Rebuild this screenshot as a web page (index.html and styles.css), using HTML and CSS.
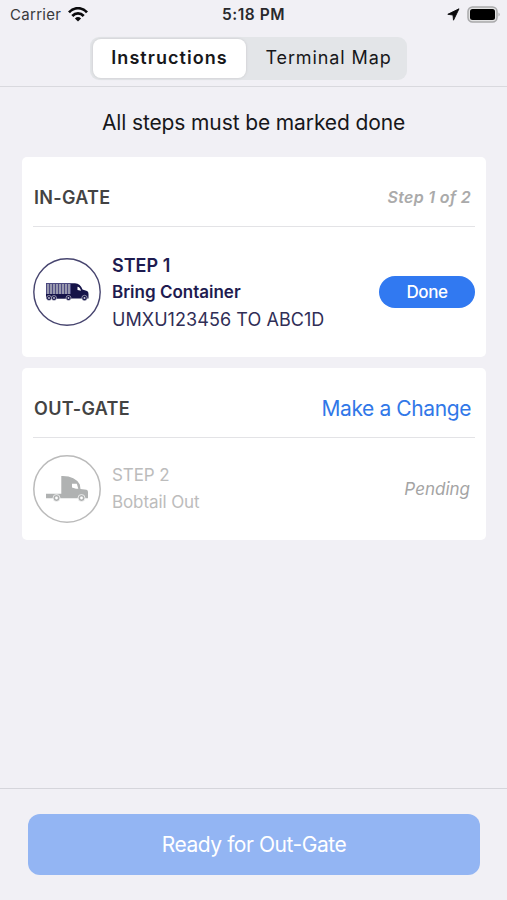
FILE: index.html
```html
<!DOCTYPE html>
<html lang="en">
<head>
<meta charset="utf-8">
<title>Instructions</title>
<link rel="stylesheet" href="styles.css">
</head>
<body>
<div class="app">
  <header class="header">
    <div class="status">
      <div class="status-left">
        <span class="carrier">Carrier</span>
        <svg class="wifi" width="20" height="15" viewBox="0 0 20 15" fill="none" stroke="#0a0a0c" stroke-width="2.7">
          <path d="M1 5.4C6-.2 14-.2 19 5.4"/>
          <path d="M4.3 9C7.5 5.5 12.500 5.500 15.700 9"/>
          <path d="M10 14.500L6.900 11.400Q10 8.800 13.100 11.400Z" fill="#0a0a0c" stroke="none"/>
        </svg>
      </div>
      <span class="clock">5:18 PM</span>
      <div class="status-right">
        <svg width="13" height="13" viewBox="0 0 13 13"><path d="M12 .8L.8 6.300L6 7L6.500 12.200Z" fill="#0a0a0c" stroke="#0a0a0c" stroke-width=".9" stroke-linejoin="round"/></svg>
        <svg width="34" height="17" viewBox="0 0 34 17"><rect x="1" y="1" width="29" height="15" rx="4.500" fill="#e2e2e3" stroke="#a9a9ab" stroke-width="1.500"/><rect x="3" y="3" width="25" height="11" rx="2.500" fill="#000"/><path d="M31.500 6.500Q34 8.500 31.500 10.500Z" fill="#a9a9ab"/></svg>
      </div>
    </div>
    <nav class="segments">
      <button class="segment active"><span>Instructions</span></button>
      <button class="segment idle"><span>Terminal Map</span></button>
    </nav>
  </header>
  <main class="main">
    <h1 class="headline">All steps must be marked done</h1>
    <section class="card card-in">
      <div class="card-head">
        <h2 class="gate">IN-GATE</h2>
        <span class="counter">Step 1 of 2</span>
      </div>
      <div class="step">
        <svg class="badge navy" width="68" height="68" viewBox="0 0 68 68">
          <circle cx="34" cy="34" r="33.200" fill="none" stroke="#47456f" stroke-width="1.400"/>
          <path d="M13 25H38V41H13Z" fill="#9797ad"/>
          <path d="M13 25.500H38M13.500 25V38M16.500 26V36M19.500 26V36M22.500 26V36M25.500 26V36M28.500 26V36M31.500 26V36M34.500 26V36M37.500 26V36" stroke="#44427a" stroke-width=".9" fill="none"/>
          <path d="M13 36H38.500V40.500H13Z"/>
          <path d="M38 25.200H42Q47.500 25.500 49.500 31.500L54 33Q55.500 33.500 55.500 36V40.500H38Z"/>
          <path d="M44.500 28.800Q46.800 29 48 32.800L44.500 32Z" fill="#fff"/>
          <g stroke="#fff" stroke-width=".5"><circle cx="16" cy="40" r="2.500"/><circle cx="21" cy="40" r="2.500"/><circle cx="35.500" cy="40" r="2.500"/><circle cx="51.500" cy="40" r="2.700"/></g>
          <g fill="#ccccda"><circle cx="16" cy="40" r=".9"/><circle cx="21" cy="40" r=".9"/><circle cx="35.500" cy="40" r=".9"/><circle cx="51.500" cy="40" r="1"/></g>
        </svg>
        <div class="detail navy">
          <span class="step-name">STEP 1</span>
          <span class="task">Bring Container</span>
          <span class="unit">UMXU123456 TO ABC1D</span>
        </div>
        <button class="done"><span>Done</span></button>
      </div>
    </section>
    <section class="card card-out">
      <div class="card-head">
        <h2 class="gate">OUT-GATE</h2>
        <a class="change">Make a Change</a>
      </div>
      <div class="step">
        <svg class="badge" width="68" height="68" viewBox="0 0 68 68" fill="#b0b2b2">
          <circle cx="34" cy="34" r="33.200" fill="none" stroke="#bbb" stroke-width="1.500"/>
          <path d="M13 38.700H28.300V21Q42 20.500 46.800 29.500L47.500 34L53.500 34.700Q55 35 55 37V43.300H13Z"/>
          <path d="M39 28.700H43.800L45.300 33.800H43L39 32.500Z" fill="#fff"/>
          <g stroke="#fff" stroke-width=".7"><circle cx="23.500" cy="43" r="3.500"/><circle cx="48.500" cy="43" r="3.500"/></g>
          <g fill="#fff"><circle cx="23.500" cy="43" r="1.400"/><circle cx="48.500" cy="43" r="1.400"/></g>
        </svg>
        <div class="detail muted">
          <span>STEP 2</span>
          <span>Bobtail Out</span>
        </div>
        <span class="pending">Pending</span>
      </div>
    </section>
  </main>
  <footer class="footer">
    <button class="ready"><span>Ready for Out-Gate</span></button>
  </footer>
</div>
</body>
</html>
```
FILE: styles.css
```css
* { box-sizing: border-box; }
body { margin: 0; background: #f1f0f5; font-family: Inter, "Liberation Sans", sans-serif; color: #17171a; }
button { border: 0; padding: 0; font: inherit; color: inherit; background: none; }
h1, h2 { margin: 0; }
span, a, h1, h2 { white-space: nowrap; }
svg { display: block; flex: none; }
.app { height: 900px; display: flex; flex-direction: column; }
.header { height: 87px; border-bottom: 1px solid #d9d9de; }
.status { height: 30px; display: grid; grid-template-columns: 1fr auto 1fr; align-items: center; padding: 0 9px; line-height: 30px; }
.status-left, .status-right { display: flex; align-items: center; }
.status-left { gap: 7px; padding-left: 1px; }
.status-right { justify-content: flex-end; gap: 7px; padding-bottom: 1px; margin-right: -3px; }
.carrier { font-size: 15px; letter-spacing: .3px; color: #39393c; }
.wifi { margin-top: -1px; }
.clock { font-size: 15.5px; font-weight: 600; letter-spacing: .5px; color: #29292c; }
.segments { width: 317px; height: 43px; margin: 7px auto 0 90px; padding: 2px 3px; display: flex; background: #e3e5e8; border-radius: 9px; }
.segment { flex: 1; font-size: 18px; letter-spacing: .9px; padding-bottom: 2px; }
.segment.active { flex: 0 0 153px; background: #fff; border-radius: 8px; font-weight: 600; letter-spacing: 1.05px; box-shadow: 0 0 2px 1px #d5d6d9; }
.segment.idle { padding-left: 7px; }
.main { flex: 1; padding: 0 22px; }
.headline { height: 70px; line-height: 72px; text-align: center; font-size: 21px; font-weight: 400; letter-spacing: -.12px; }
.card { background: #fff; border-radius: 5px; padding: 0 11px; margin-right: -1px; }
.card-in { height: 200px; margin-bottom: 11px; }
.card-out { height: 172px; }
.card-head { height: 70px; padding: 11px 4px 0 1px; border-bottom: 1px solid #e3e3e6; display: flex; align-items: center; justify-content: space-between; }
.gate { font-size: 18px; font-weight: 600; letter-spacing: .3px; color: #434343; }
.counter { font-size: 16px; font-weight: 600; font-style: italic; letter-spacing: .3px; color: #aaa; }
.change { font-size: 21px; letter-spacing: -.4px; color: #3178e8; }
.step { height: 130px; display: flex; align-items: center; }
.card-out .step { height: 102px; }
.badge.navy, .navy { fill: #161449; color: #1e1b50; }
.detail { display: flex; flex-direction: column; margin-left: 11px; line-height: 27px; }
.detail.navy { padding-top: 1px; }
.step-name, .task { font-weight: 600; }
.step-name { font-size: 18px; }
.task { font-size: 17px; line-height: 26px; }
.unit { font-size: 18px; line-height: 29px; letter-spacing: .07px; color: #302e56; }
.muted { font-size: 17px; letter-spacing: -.1px; color: #bcbcbc; }
.done { width: 96px; height: 32px; margin-left: auto; border-radius: 16px; background: #3179f1; color: #fff; font-size: 17px; font-weight: 500; letter-spacing: -.4px; }
.pending { margin: 0 5px 0 auto; font-size: 17px; font-style: italic; color: #a4a4a4; }
.footer { height: 112px; border-top: 1px solid #d5d5db; padding: 25px 27px 0 28px; }
.ready { width: 100%; height: 61px; border-radius: 12px; background: #93b5f3; color: #fff; font-size: 21px; letter-spacing: -.45px; }
```
